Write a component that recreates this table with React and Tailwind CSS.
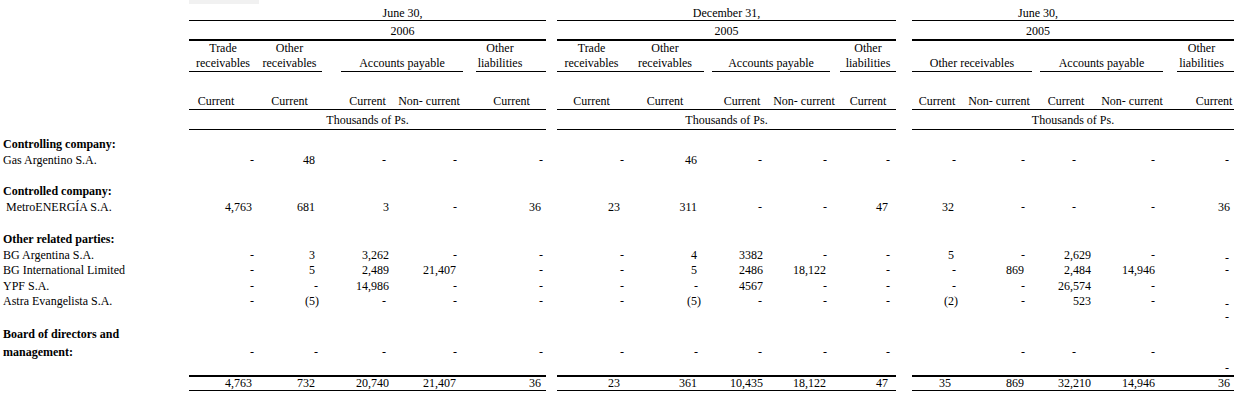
import clsx from 'clsx';

// One column template for every row: label, 5 cols, gap, 5 cols, gap, 5 cols.
const GRID =
  'grid grid-cols-[189px_68px_65px_70px_74px_80px_11px_69px_78px_64px_72px_56px_16px_50px_74px_60px_72px_66px]';

// Per numeric column: right padding for figures, for dashes, and header nudge.
const COLS = [
  { pr: 'pr-[5px]', dash: 'pr-[3px]', hd: 'pr-[14px]' },
  { pr: 'pr-[7px]', dash: 'pr-[4px]', hd: '' },
  { pr: 'pr-[3px]', dash: 'pr-[6px]', hd: 'pl-[21px]' },
  { pr: 'pr-[10px]', dash: 'pr-[9px]', hd: '' },
  { pr: 'pr-[5px]', dash: 'pr-[3px]', hd: 'pl-[11px]' },

  { pr: 'pr-[6px]', dash: 'pr-[2px]', hd: '' },
  { pr: 'pr-[7px]', dash: 'pr-[6px]', hd: '' },
  { pr: 'pr-[5px]', dash: 'pr-[6px]', hd: 'pl-[12px]' },
  { pr: 'pr-[14px]', dash: 'pr-[13px]', hd: '' },
  { pr: 'pr-[8px]', dash: 'pr-[6px]', hd: '' },

  { pr: 'pr-[8px]', dash: 'pr-[6px]', hd: '' },
  { pr: 'pr-[12px]', dash: 'pr-[11px]', hd: '' },
  { pr: 'pr-[5px]', dash: 'pr-[20px]', hd: '' },
  { pr: 'pr-[13px]', dash: 'pr-[13px]', hd: '' },
  { pr: 'pr-[4px]', dash: 'pr-[5px]', hd: 'pl-[26px]' },
];

const SUB = [
  'Current', 'Current', 'Current', 'Non- current', 'Current',
  'Current', 'Current', 'Current', 'Non- current', 'Current',
  'Current', 'Non- current', 'Current', 'Non- current', 'Current',
];

const D = '-';

const ROWS = [
  { label: 'Controlling company:', bold: true, h: 'h-[22px]' },
  { label: 'Gas Argentino S.A.', h: 'h-[16px]', v: [D, '48', D, D, D, D, '46', D, D, D, D, D, D, D, D] },
  { h: 'h-[15px]' },
  { label: 'Controlled company:', bold: true, h: 'h-[16px]' },
  { label: 'MetroENERGÍA S.A.', indent: true, h: 'h-[16px]', v: ['4,763', '681', '3', D, '36', '23', '311', D, D, '47', '32', D, D, D, '36'] },
  { h: 'h-[16px]' },
  { label: 'Other related parties:', bold: true, h: 'h-[16px]' },
  { label: 'BG Argentina S.A.', h: 'h-[15px]', low: true, v: [D, '3', '3,262', D, D, D, '4', '3382', D, D, '5', D, '2,629', D, D] },
  { label: 'BG International Limited', h: 'h-[16px]', v: [D, '5', '2,489', '21,407', D, D, '5', '2486', '18,122', D, D, '869', '2,484', '14,946', D] },
  { label: 'YPF S.A.', h: 'h-[15px]', v: [D, D, '14,986', D, D, D, D, '4567', D, D, D, D, '26,574', D, null] },
  { label: 'Astra Evangelista S.A.', h: 'h-[16px]', low: true, v: [D, '(5)', D, D, D, D, '(5)', D, D, D, '(2)', D, '523', D, D] },
  { h: 'h-[16px]', v: [null, null, null, null, null, null, null, null, null, null, null, null, null, null, D] },
  { label: 'Board of directors and', bold: true, h: 'h-[17px]' },
  { label: 'management:', bold: true, h: 'h-[18px]', v: [D, D, D, D, D, D, D, D, D, D, null, D, D, D, null] },
  { h: 'h-[15px]', v: [null, null, null, null, null, null, null, null, null, null, null, null, null, null, D] },
];

const TOTALS = ['4,763', '732', '20,740', '21,407', '36', '23', '361', '10,435', '18,122', '47', '35', '869', '32,210', '14,946', '36'];

// Put the two spacer columns between the three blocks.
function withGaps(cells) {
  return [
    ...cells.slice(0, 5),
    <div key="g1" />,
    ...cells.slice(5, 10),
    <div key="g2" />,
    ...cells.slice(10, 15),
  ];
}

function Value({ v, col, low, className }) {
  if (v == null) return <div className={className} />;
  const isDash = v === D;
  return (
    <div className={clsx('text-right whitespace-nowrap', isDash ? col.dash : col.pr, className)}>
      {v.startsWith('(') ? (
        <span className="mr-[-4px]">{v}</span>
      ) : low ? (
        <span className="inline-block translate-y-[3px]">{v}</span>
      ) : (
        v
      )}
    </div>
  );
}

function Underlined({ className, span, children, inner }) {
  return (
    <div className={clsx(span)}>
      <div className={clsx('flex h-[31px] flex-col justify-end border-b border-black text-center leading-[15px]', className)}>
        <div className={inner}>{children}</div>
      </div>
    </div>
  );
}

export default function App() {
  return (
    <div className="h-[407px] w-[1234px] overflow-hidden bg-white font-['Liberation_Serif','Times_New_Roman',serif] text-[12px] text-black">
      {/* Period titles */}
      <div className={GRID}>
        <div />
        <div className="col-span-5 border-b border-black">
          <div className="h-[4px]">
            <div className="h-[4px] w-[70px] bg-[#f1f1f1]" />
          </div>
          <div className="pl-[70px] pt-[3px] text-center leading-[13px]">June 30,</div>
        </div>
        <div />
        <div className="col-span-5 border-b border-black">
          <div className="h-[4px]" />
          <div className="pt-[3px] text-center leading-[13px]">December 31,</div>
        </div>
        <div />
        <div className="col-span-5 border-b border-black">
          <div className="h-[4px]" />
          <div className="pr-[70px] pt-[3px] text-center leading-[13px]">June 30,</div>
        </div>
      </div>

      <div className={GRID}>
        <div />
        <div className="col-span-5 border-b-2 border-black pl-[70px] pt-[3px] text-center leading-[15px]">2006</div>
        <div />
        <div className="col-span-5 border-b-2 border-black pt-[3px] text-center leading-[15px]">2005</div>
        <div />
        <div className="col-span-5 border-b-2 border-black pr-[70px] pt-[3px] text-center leading-[15px]">2005</div>
      </div>

      {/* Account groups */}
      <div className={GRID}>
        <div />
        <Underlined>Trade<br />receivables</Underlined>
        <Underlined>Other<br />receivables</Underlined>
        <Underlined span="col-span-2" className="ml-[19px] mr-[3px]">Accounts payable</Underlined>
        <Underlined className="ml-[10px]" inner="pr-[22px]">Other<br />liabilities</Underlined>
        <div />
        <Underlined>Trade<br />receivables</Underlined>
        <Underlined>Other<br />receivables</Underlined>
        <Underlined span="col-span-2" className="ml-[8px] mr-[10px]">Accounts payable</Underlined>
        <Underlined>Other<br />liabilities</Underlined>
        <div />
        <Underlined span="col-span-2" className="mr-[4px]">Other receivables</Underlined>
        <Underlined span="col-span-2" className="ml-[4px] mr-[5px]">Accounts payable</Underlined>
        <Underlined className="ml-[9px]" inner="pr-[8px]">Other<br />liabilities</Underlined>
      </div>

      <div className={clsx(GRID, 'items-end')}>
        <div />
        {withGaps(
          SUB.map((s, i) => (
            <div key={i} className={clsx('flex h-[38px] items-end justify-center border-b border-black leading-[15px] whitespace-nowrap', COLS[i].hd)}>
              {s}
            </div>
          )),
        )}
      </div>

      <div className={GRID}>
        <div />
        <div className="col-span-5 border-b border-black pb-[1px] pt-[3px] text-center leading-[15px]">Thousands of Ps.</div>
        <div />
        <div className="col-span-5 border-b border-black pb-[1px] pt-[3px] text-center leading-[15px]">Thousands of Ps.</div>
        <div />
        <div className="col-span-5 border-b border-black pb-[1px] pt-[3px] text-center leading-[15px]">Thousands of Ps.</div>
      </div>

      {/* Body */}
      {ROWS.map((r, ri) => (
        <div key={ri} className={clsx(GRID, 'items-end leading-[16px]', r.h)}>
          <div className={clsx('whitespace-nowrap', r.indent ? 'pl-[6px]' : 'pl-[3px]', r.bold && 'font-bold')}>
            {r.label}
          </div>
          {r.v &&
            withGaps(
              r.v.map((v, i) => <Value key={i} v={v} col={COLS[i]} low={r.low && i === 14} />),
            )}
        </div>
      ))}

      <div className={clsx(GRID, 'leading-[13px]')}>
        <div />
        {withGaps(
          TOTALS.map((v, i) => (
            <Value
              key={i}
              v={v}
              col={COLS[i]}
              className={clsx('h-[16px] border-t-2 border-b border-black', i === 10 && 'pr-[11px]')}
            />
          )),
        )}
      </div>
    </div>
  );
}
